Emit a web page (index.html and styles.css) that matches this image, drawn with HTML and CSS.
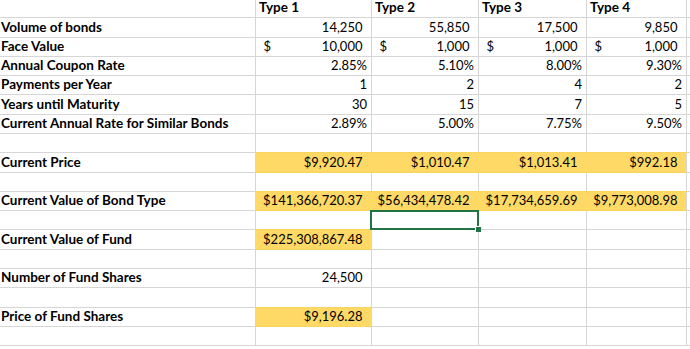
FILE: index.html
```html
<!DOCTYPE html>
<html>
<head>
<meta charset="utf-8">
<link rel="stylesheet" href="styles.css">
</head>
<body>
<div class="sheet">
  <div class="c"></div><div class="c hd">Type 1</div><div class="c hd">Type 2</div><div class="c hd">Type 3</div><div class="c hd">Type 4</div><div class="c f"></div>

  <div class="c lbl">Volume of bonds</div><div class="c num pad">14,250</div><div class="c num pad">55,850</div><div class="c num pad">17,500</div><div class="c num pad">9,850</div><div class="c f"></div>

  <div class="c lbl">Face Value</div><div class="c acct"><span>$</span><span>10,000</span></div><div class="c acct"><span>$</span><span>1,000</span></div><div class="c acct"><span>$</span><span>1,000</span></div><div class="c acct"><span>$</span><span>1,000</span></div><div class="c f"></div>

  <div class="c lbl">Annual Coupon Rate</div><div class="c num">2.85%</div><div class="c num">5.10%</div><div class="c num">8.00%</div><div class="c num">9.30%</div><div class="c f"></div>

  <div class="c lbl">Payments per Year</div><div class="c num">1</div><div class="c num">2</div><div class="c num">4</div><div class="c num">2</div><div class="c f"></div>

  <div class="c lbl">Years until Maturity</div><div class="c num">30</div><div class="c num">15</div><div class="c num">7</div><div class="c num">5</div><div class="c f"></div>

  <div class="c lbl">Current Annual Rate for Similar Bonds</div><div class="c num">2.89%</div><div class="c num">5.00%</div><div class="c num">7.75%</div><div class="c num">9.50%</div><div class="c f"></div>

  <div class="c"></div><div class="c"></div><div class="c"></div><div class="c"></div><div class="c"></div><div class="c f"></div>

  <div class="c lbl">Current Price</div><div class="c num pad y">$9,920.47</div><div class="c num pad y">$1,010.47</div><div class="c num pad y">$1,013.41</div><div class="c num pad y ye">$992.18</div><div class="c f"></div>

  <div class="c"></div><div class="c"></div><div class="c"></div><div class="c"></div><div class="c"></div><div class="c f"></div>

  <div class="c lbl">Current Value of Bond Type</div><div class="c num pad y">$141,366,720.37</div><div class="c num pad y">$56,434,478.42</div><div class="c num pad y">$17,734,659.69</div><div class="c num pad y ye">$9,773,008.98</div><div class="c f"></div>

  <div class="c"></div><div class="c"></div><div class="c sel"></div><div class="c"></div><div class="c"></div><div class="c f"></div>

  <div class="c lbl">Current Value of Fund</div><div class="c num pad y ye">$225,308,867.48</div><div class="c"></div><div class="c"></div><div class="c"></div><div class="c f"></div>

  <div class="c"></div><div class="c"></div><div class="c"></div><div class="c"></div><div class="c"></div><div class="c f"></div>

  <div class="c lbl">Number of Fund Shares</div><div class="c num pad">24,500</div><div class="c"></div><div class="c"></div><div class="c"></div><div class="c f"></div>

  <div class="c"></div><div class="c"></div><div class="c"></div><div class="c"></div><div class="c"></div><div class="c f"></div>

  <div class="c lbl">Price of Fund Shares</div><div class="c num pad y ye">$9,196.28</div><div class="c"></div><div class="c"></div><div class="c"></div><div class="c f"></div>

  <div class="c"></div><div class="c"></div><div class="c"></div><div class="c"></div><div class="c"></div><div class="c f"></div>
</div>
</body>
</html>
```

FILE: styles.css
```css
html, body {
  margin: 0;
  padding: 0;
  background: #ffffff;
}

body {
  width: 690px;
  height: 349px;
  overflow: hidden;
  font-family: Lato, "Open Sans", sans-serif;
  font-size: 13px;
  color: #000000;
}

.sheet {
  display: grid;
  grid-template-columns: 255.5px 116px 107px 108px 100px 1fr;
  grid-auto-rows: 19.3px;
  margin-top: -1.1px;
}

.c {
  box-sizing: border-box;
  border-right: 1px solid #d6d6d6;
  border-bottom: 1px solid #d6d6d6;
  display: flex;
  align-items: flex-end;
  padding: 0 3.5px 2px 3px;
  line-height: 15px;
  white-space: nowrap;
}

.c:nth-child(6n+1) {
  padding-left: 1px;
}

.f {
  border-right-color: #c8c8c8;
}

.lbl,
.hd {
  font-weight: 700;
  font-size: 13.5px;
}

.hd {
  padding-left: 3.5px;
}

.num {
  justify-content: flex-end;
}

.pad {
  padding-right: 8px;
}

.acct {
  justify-content: space-between;
  padding-left: 8px;
  padding-right: 8px;
}

.y {
  background: #ffd966;
  border-right-color: #ffd966;
  border-bottom-color: #f9d45c;
  box-shadow: 0 -1px 0 #f9d45c;
}

.ye {
  border-right-color: #d6d6d6;
}

.sel {
  position: relative;
}

.sel::before {
  content: "";
  position: absolute;
  left: -1.5px;
  top: -1.5px;
  right: -1px;
  bottom: -1px;
  border: 2px solid #217346;
}

.sel::after {
  content: "";
  position: absolute;
  right: -3px;
  bottom: -3px;
  width: 5px;
  height: 5px;
  background: #217346;
  box-shadow: -1px -1px 0 #ffffff;
}
```
